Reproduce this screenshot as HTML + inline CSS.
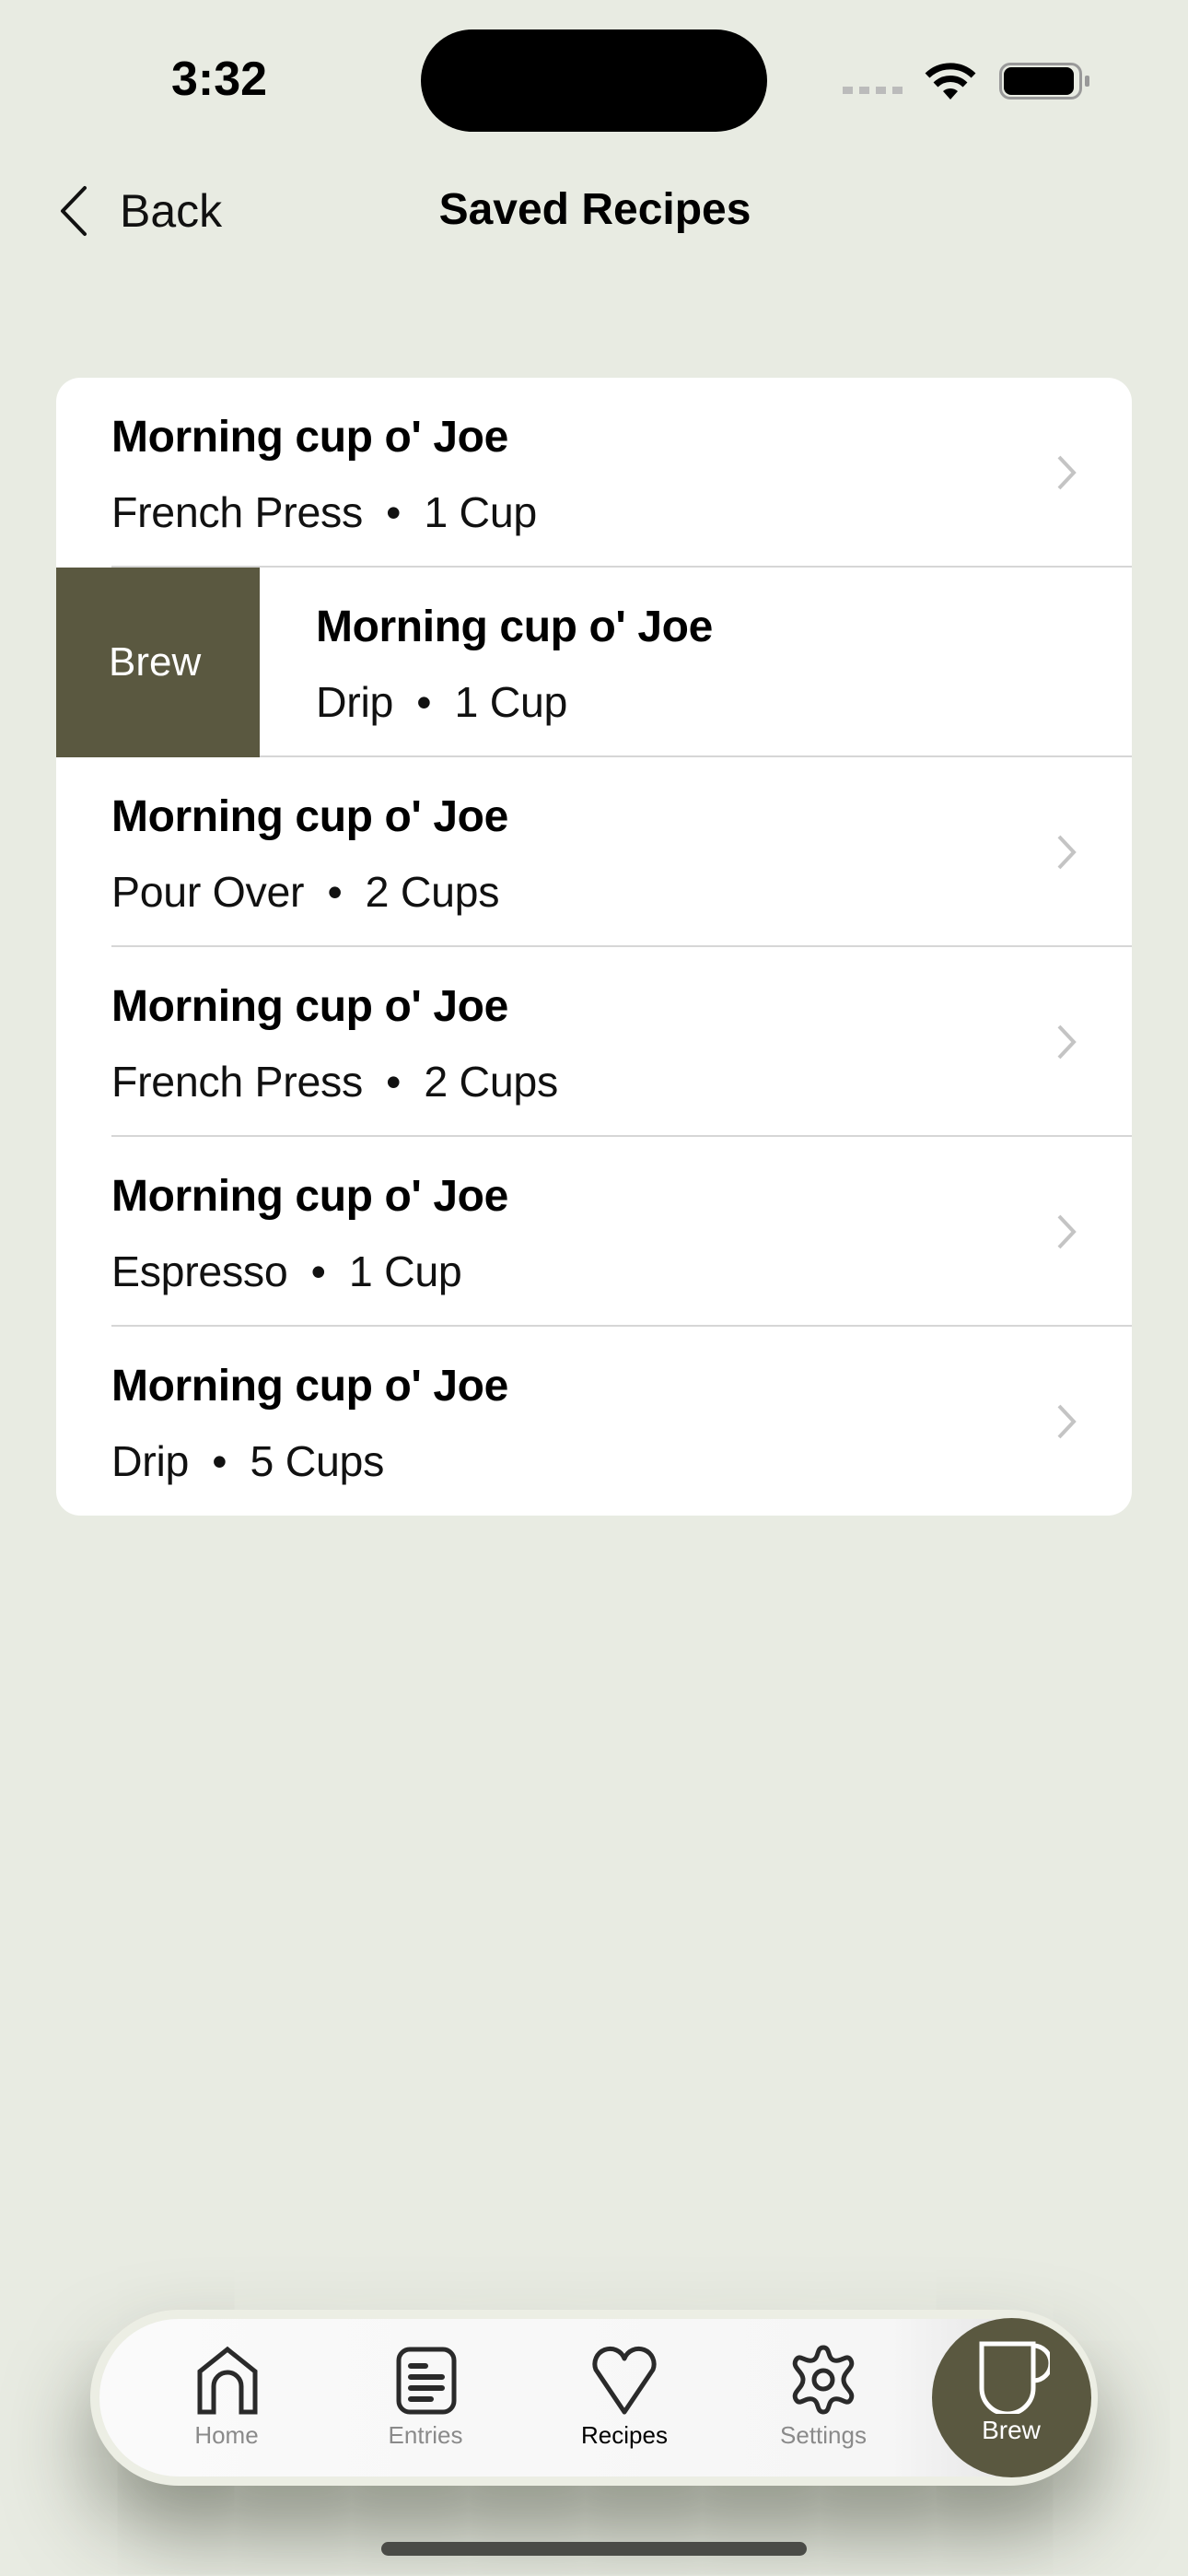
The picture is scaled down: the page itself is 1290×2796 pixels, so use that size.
<!DOCTYPE html>
<html><head><meta charset="utf-8"><style>
*{margin:0;padding:0;box-sizing:border-box}
body{width:1290px;height:2796px;background:#e8ebe2;font-family:"Liberation Sans",sans-serif;position:relative;overflow:hidden;color:#000}
.abs{position:absolute}
.card{left:61px;top:410px;width:1168px;height:1235px;background:#fff;border-radius:26px;overflow:hidden}
.row{position:absolute;left:0;width:1168px;height:206px}
.t{position:absolute;font-size:48px;font-weight:bold;letter-spacing:-0.4px;white-space:nowrap}
.s{position:absolute;font-size:46.5px;color:#111;letter-spacing:-0.3px;white-space:nowrap}
.sep{position:absolute;right:0;height:2px;background:#d6d6d6}
.chev{position:absolute;left:1085px;top:82px}
.lab{position:absolute;font-size:26px;color:#8a8a8a;transform:translateX(-50%);top:2628px}
</style></head><body>
<div class="abs" style="left:186px;top:56px;font-size:52px;font-weight:bold">3:32</div>
<div class="abs" style="left:457px;top:32px;width:376px;height:111px;background:#000;border-radius:56px"></div>
<div class="abs" style="left:915px;top:94px;width:66px;height:8px;background:repeating-linear-gradient(90deg,#bbb 0 11px,transparent 11px 18px)"></div>
<svg class="abs" style="left:1002px;top:66px" width="60" height="44" viewBox="0 0 60 44"><path d="M30 42 L22 33 A12 12 0 0 1 38 33 Z" fill="#000"/><path d="M14 26 A23 23 0 0 1 46 26" stroke="#000" stroke-width="7" fill="none"/><path d="M5 16 A36 36 0 0 1 55 16" stroke="#000" stroke-width="7" fill="none"/></svg>
<div class="abs" style="left:1085px;top:68px;width:90px;height:40px;border:3px solid #999;border-radius:12px"></div>
<div class="abs" style="left:1090px;top:73px;width:76px;height:30px;background:#000;border-radius:8px"></div>
<div class="abs" style="left:1178px;top:82px;width:5px;height:12px;background:#999;border-radius:2px"></div>
<svg class="abs" style="left:60px;top:198px" width="40" height="62" viewBox="0 0 40 62"><path d="M32 6 L8 31 L32 56" stroke="#111" stroke-width="4" fill="none" stroke-linecap="round" stroke-linejoin="round"/></svg>
<div class="abs" style="left:130px;top:200px;font-size:50px;color:#111">Back</div>
<div class="abs" style="left:646px;top:200px;font-size:48px;font-weight:bold;transform:translateX(-50%);white-space:nowrap">Saved Recipes</div>
<div class="abs card">
 <div class="row" style="top:0"><div class="t" style="left:60px;top:37px">Morning cup o' Joe</div><div class="s" style="left:60px;top:119px">French Press &nbsp;•&nbsp; 1 Cup</div><svg class="chev" width="24" height="42"><path d="M4 4 L20 21 L4 38" stroke="#c4c4c4" stroke-width="4" fill="none"/></svg><div class="sep" style="left:60px;top:204px"></div></div>
 <div class="row" style="top:206px"><div class="abs" style="left:0;top:0;width:221px;height:206px;background:#5a5840"></div><div class="abs" style="left:57px;top:78px;color:#fff;font-size:44px">Brew</div><div class="t" style="left:282px;top:37px">Morning cup o' Joe</div><div class="s" style="left:282px;top:119px">Drip &nbsp;•&nbsp; 1 Cup</div><div class="sep" style="left:221px;top:204px"></div></div>
 <div class="row" style="top:412px"><div class="t" style="left:60px;top:37px">Morning cup o' Joe</div><div class="s" style="left:60px;top:119px">Pour Over &nbsp;•&nbsp; 2 Cups</div><svg class="chev" width="24" height="42"><path d="M4 4 L20 21 L4 38" stroke="#c4c4c4" stroke-width="4" fill="none"/></svg><div class="sep" style="left:60px;top:204px"></div></div>
 <div class="row" style="top:618px"><div class="t" style="left:60px;top:37px">Morning cup o' Joe</div><div class="s" style="left:60px;top:119px">French Press &nbsp;•&nbsp; 2 Cups</div><svg class="chev" width="24" height="42"><path d="M4 4 L20 21 L4 38" stroke="#c4c4c4" stroke-width="4" fill="none"/></svg><div class="sep" style="left:60px;top:204px"></div></div>
 <div class="row" style="top:824px"><div class="t" style="left:60px;top:37px">Morning cup o' Joe</div><div class="s" style="left:60px;top:119px">Espresso &nbsp;•&nbsp; 1 Cup</div><svg class="chev" width="24" height="42"><path d="M4 4 L20 21 L4 38" stroke="#c4c4c4" stroke-width="4" fill="none"/></svg><div class="sep" style="left:60px;top:204px"></div></div>
 <div class="row" style="top:1030px"><div class="t" style="left:60px;top:37px">Morning cup o' Joe</div><div class="s" style="left:60px;top:119px">Drip &nbsp;•&nbsp; 5 Cups</div><svg class="chev" width="24" height="42"><path d="M4 4 L20 21 L4 38" stroke="#c4c4c4" stroke-width="4" fill="none"/></svg></div>
</div>
<div class="abs" style="left:98px;top:2507px;width:1094px;height:191px;border-radius:96px;background:#eceee4;box-shadow:0 50px 90px rgba(50,55,40,0.5)"></div>
<div class="abs" style="left:108px;top:2517px;width:1074px;height:171px;border-radius:86px;background:linear-gradient(90deg,#fafafa 0%,#f6f6f6 80%,#dcdcdc 100%)"></div>
<svg class="abs" style="left:212px;top:2546px" width="70" height="76" viewBox="0 0 70 76"><path d="M5 72 V28 L35 4 L65 28 V72 H50 V44 A15 15 0 0 0 20 44 V72 Z" stroke="#2a2a2a" stroke-width="5" fill="none" stroke-linejoin="miter"/></svg>
<svg class="abs" style="left:428px;top:2546px" width="70" height="76" viewBox="0 0 70 76"><rect x="5" y="4" width="60" height="68" rx="12" stroke="#2a2a2a" stroke-width="5" fill="none"/><path d="M18 22 H34 M18 34 H52 M18 46 H52 M18 58 H40" stroke="#2a2a2a" stroke-width="6" stroke-linecap="round"/></svg>
<svg class="abs" style="left:640px;top:2546px" width="76" height="76" viewBox="0 0 76 76"><path d="M38 72 L7 26 A16 16 0 0 1 38 14 A16 16 0 0 1 69 26 Z" stroke="#2a2a2a" stroke-width="5" fill="none" stroke-linejoin="round"/></svg>
<svg class="abs" style="left:858px;top:2544px" width="72" height="78" viewBox="0 0 72 78"><path d="M36 4 C44 4 40 16 48 18 C56 20 62 10 66 18 C70 26 58 30 58 39 C58 48 70 52 66 60 C62 68 56 58 48 60 C40 62 44 74 36 74 C28 74 32 62 24 60 C16 58 10 68 6 60 C2 52 14 48 14 39 C14 30 2 26 6 18 C10 10 16 20 24 18 C32 16 28 4 36 4 Z" stroke="#2a2a2a" stroke-width="5" fill="none"/><circle cx="36" cy="39" r="10" stroke="#2a2a2a" stroke-width="5" fill="none"/></svg>
<div class="lab" style="left:246px">Home</div>
<div class="lab" style="left:462px">Entries</div>
<div class="lab" style="left:678px;color:#000">Recipes</div>
<div class="lab" style="left:894px">Settings</div>
<div class="abs" style="left:1012px;top:2516px;width:173px;height:173px;border-radius:50%;background:#5a5840"></div>
<svg class="abs" style="left:1060px;top:2540px" width="80" height="80" viewBox="0 0 80 80"><path d="M6 4 H62 V52 A28 28 0 0 1 6 52 Z" stroke="#fff" stroke-width="5" fill="none"/><path d="M62 6 A16 16 0 0 1 62 44" stroke="#fff" stroke-width="5" fill="none"/></svg>
<div class="abs" style="left:1098px;top:2622px;transform:translateX(-50%);color:#fff;font-size:28px">Brew</div>
<div class="abs" style="left:414px;top:2759px;width:462px;height:15px;border-radius:8px;background:#4a4b47"></div>
</body></html>
